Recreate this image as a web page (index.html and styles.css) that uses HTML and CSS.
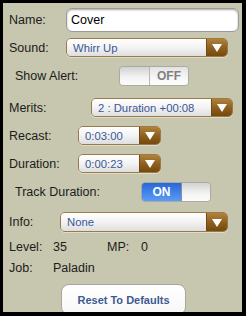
FILE: index.html
```html
<!DOCTYPE html>
<html>
<head>
<meta charset="utf-8">
<link rel="stylesheet" href="styles.css">
</head>
<body>
<div class="frame">
  <div class="panel">
    <div class="row row-name">
      <span class="lbl w-name">Name:</span>
      <div class="field">Cover</div>
    </div>
    <div class="row row-sound">
      <span class="lbl w-name">Sound:</span>
      <div class="select w-sound"><span class="sel-text">Whirr Up</span><span class="sel-btn"><span class="tri"></span></span></div>
    </div>
    <div class="row row-alert">
      <span class="lbl indent w-alert">Show Alert:</span>
      <div class="toggle off"><span class="knob"></span><span class="state">OFF</span></div>
    </div>
    <div class="row row-merits">
      <span class="lbl w-merits">Merits:</span>
      <div class="select w-merit-sel"><span class="sel-text">2 : Duration +00:08</span><span class="sel-btn"><span class="tri"></span></span></div>
    </div>
    <div class="row row-recast">
      <span class="lbl w-recast">Recast:</span>
      <div class="select w-short"><span class="sel-text">0:03:00</span><span class="sel-btn"><span class="tri"></span></span></div>
    </div>
    <div class="row row-duration">
      <span class="lbl w-recast">Duration:</span>
      <div class="select w-short"><span class="sel-text">0:00:23</span><span class="sel-btn"><span class="tri"></span></span></div>
    </div>
    <div class="row row-track">
      <span class="lbl indent w-track">Track Duration:</span>
      <div class="toggle on"><span class="state">ON</span><span class="knob"></span></div>
    </div>
    <div class="row row-info">
      <span class="lbl w-info">Info:</span>
      <div class="select w-info-sel"><span class="sel-text">None</span><span class="sel-btn"><span class="tri"></span></span></div>
    </div>
    <div class="row text-row row-level">
      <span class="lbl w-stat">Level:</span>
      <span class="val w-val">35</span>
      <span class="lbl w-mp">MP:</span>
      <span class="val">0</span>
    </div>
    <div class="row text-row row-job">
      <span class="lbl w-stat">Job:</span>
      <span class="val">Paladin</span>
    </div>
    <div class="btn-row">
      <div class="btn">Reset To Defaults</div>
    </div>
  </div>
</div>
</body>
</html>
```

FILE: styles.css
```css
* { box-sizing: border-box; }
html, body { margin: 0; padding: 0; background: #000; }
body { font-family: "Liberation Sans", Arial, sans-serif; }

.frame {
  width: 246px;
  height: 316px;
  border-style: solid;
  border-color: #000;
  border-width: 3px 4px 4px 3px;
  overflow: hidden;
}
.panel {
  width: 100%;
  height: 100%;
  background: #c7c6ae;
  padding: 4px 0 0 6px;
  display: flex;
  flex-direction: column;
}

.row {
  display: flex;
  align-items: center;
  height: 19px;
  flex: none;
}
.row-name { height: 25px; margin-top: 0; }
.row-sound { margin-top: 6px; }
.row-alert { margin-top: 9px; height: 20px; }
.row-merits { margin-top: 12px; }
.row-recast { margin-top: 9px; }
.row-duration { margin-top: 9px; }
.row-track { margin-top: 9px; height: 20px; }
.row-info { margin-top: 10px; height: 20px; }
.row-level { margin-top: 7px; height: 16px; }
.row-job { margin-top: 5px; height: 16px; }

.lbl, .val {
  flex: none;
  font-size: 12.5px;
  color: #1c1c1c;
}
.indent { margin-left: 6px; }
.w-name { width: 57px; }
.w-alert { width: 104px; }
.w-merits { width: 82px; }
.w-recast { width: 69px; }
.w-track { width: 126px; }
.w-info { width: 51px; }
.w-stat { width: 44px; }
.w-val { width: 54px; }
.w-mp { width: 34px; }

.field {
  width: 173px;
  height: 24px;
  background: #fff;
  border: 1px solid #9a9a9a;
  border-radius: 6px;
  box-shadow: inset 0 1px 2px rgba(0,0,0,0.35);
  font-size: 12.5px;
  color: #000;
  padding-left: 4px;
  display: flex;
  align-items: center;
}

.select {
  height: 100%;
  display: flex;
  border: 1px solid #9c7a48;
  border-radius: 5px;
  overflow: hidden;
  box-shadow: 0 1px 0 rgba(255,255,255,0.4);
}
.w-sound { width: 162px; }
.w-merit-sel { width: 142px; }
.w-short { width: 83px; }
.w-info-sel { width: 168px; }

.sel-text {
  flex: 1;
  background: linear-gradient(#ffffff, #f3f3f3 50%, #dedede);
  color: #3a5796;
  font-size: 11.3px;
  display: flex;
  align-items: center;
  padding-left: 6px;
  white-space: nowrap;
}
.sel-btn {
  width: 21px;
  flex: none;
  background: linear-gradient(#b0823a, #8c5f1f 55%, #74490c);
  border-left: 1px solid #6e4a14;
  display: flex;
  align-items: center;
  justify-content: center;
}
.tri {
  width: 0;
  height: 0;
  border-left: 5px solid transparent;
  border-right: 5px solid transparent;
  border-top: 8px solid #fff;
  margin-top: 1px;
}

.toggle {
  width: 70px;
  height: 20px;
  display: flex;
  border: 1px solid #a9a9a9;
  border-radius: 4px;
  overflow: hidden;
  font-size: 12px;
  font-weight: bold;
}
.toggle .knob {
  width: 30px;
  flex: none;
  background: linear-gradient(#d2d2d2, #f4f4f4 60%, #fcfcfc);
  border-right: 1px solid #b6b6b6;
}
.toggle.on .knob {
  border-right: none;
  border-left: 1px solid #8e8e8e;
  width: 29px;
}
.toggle .state {
  flex: 1;
  display: flex;
  align-items: center;
  justify-content: center;
}
.toggle.off .state {
  background: linear-gradient(#e2e2e2, #f6f6f6 55%, #fdfdfd);
  color: #808080;
}
.toggle.on .state {
  background: linear-gradient(#2a66d2, #3f82ea 50%, #5c9cf4);
  color: #fff;
}

.btn-row {
  margin-top: 8px;
  display: flex;
  padding-left: 52px;
}
.btn {
  width: 125px;
  height: 31px;
  background: linear-gradient(#ffffff, #f8f8f8);
  border: 1px solid #a7a7a0;
  border-radius: 8px;
  color: #3c5a91;
  font-size: 11px;
  font-weight: bold;
  display: flex;
  align-items: center;
  justify-content: center;
}
```
